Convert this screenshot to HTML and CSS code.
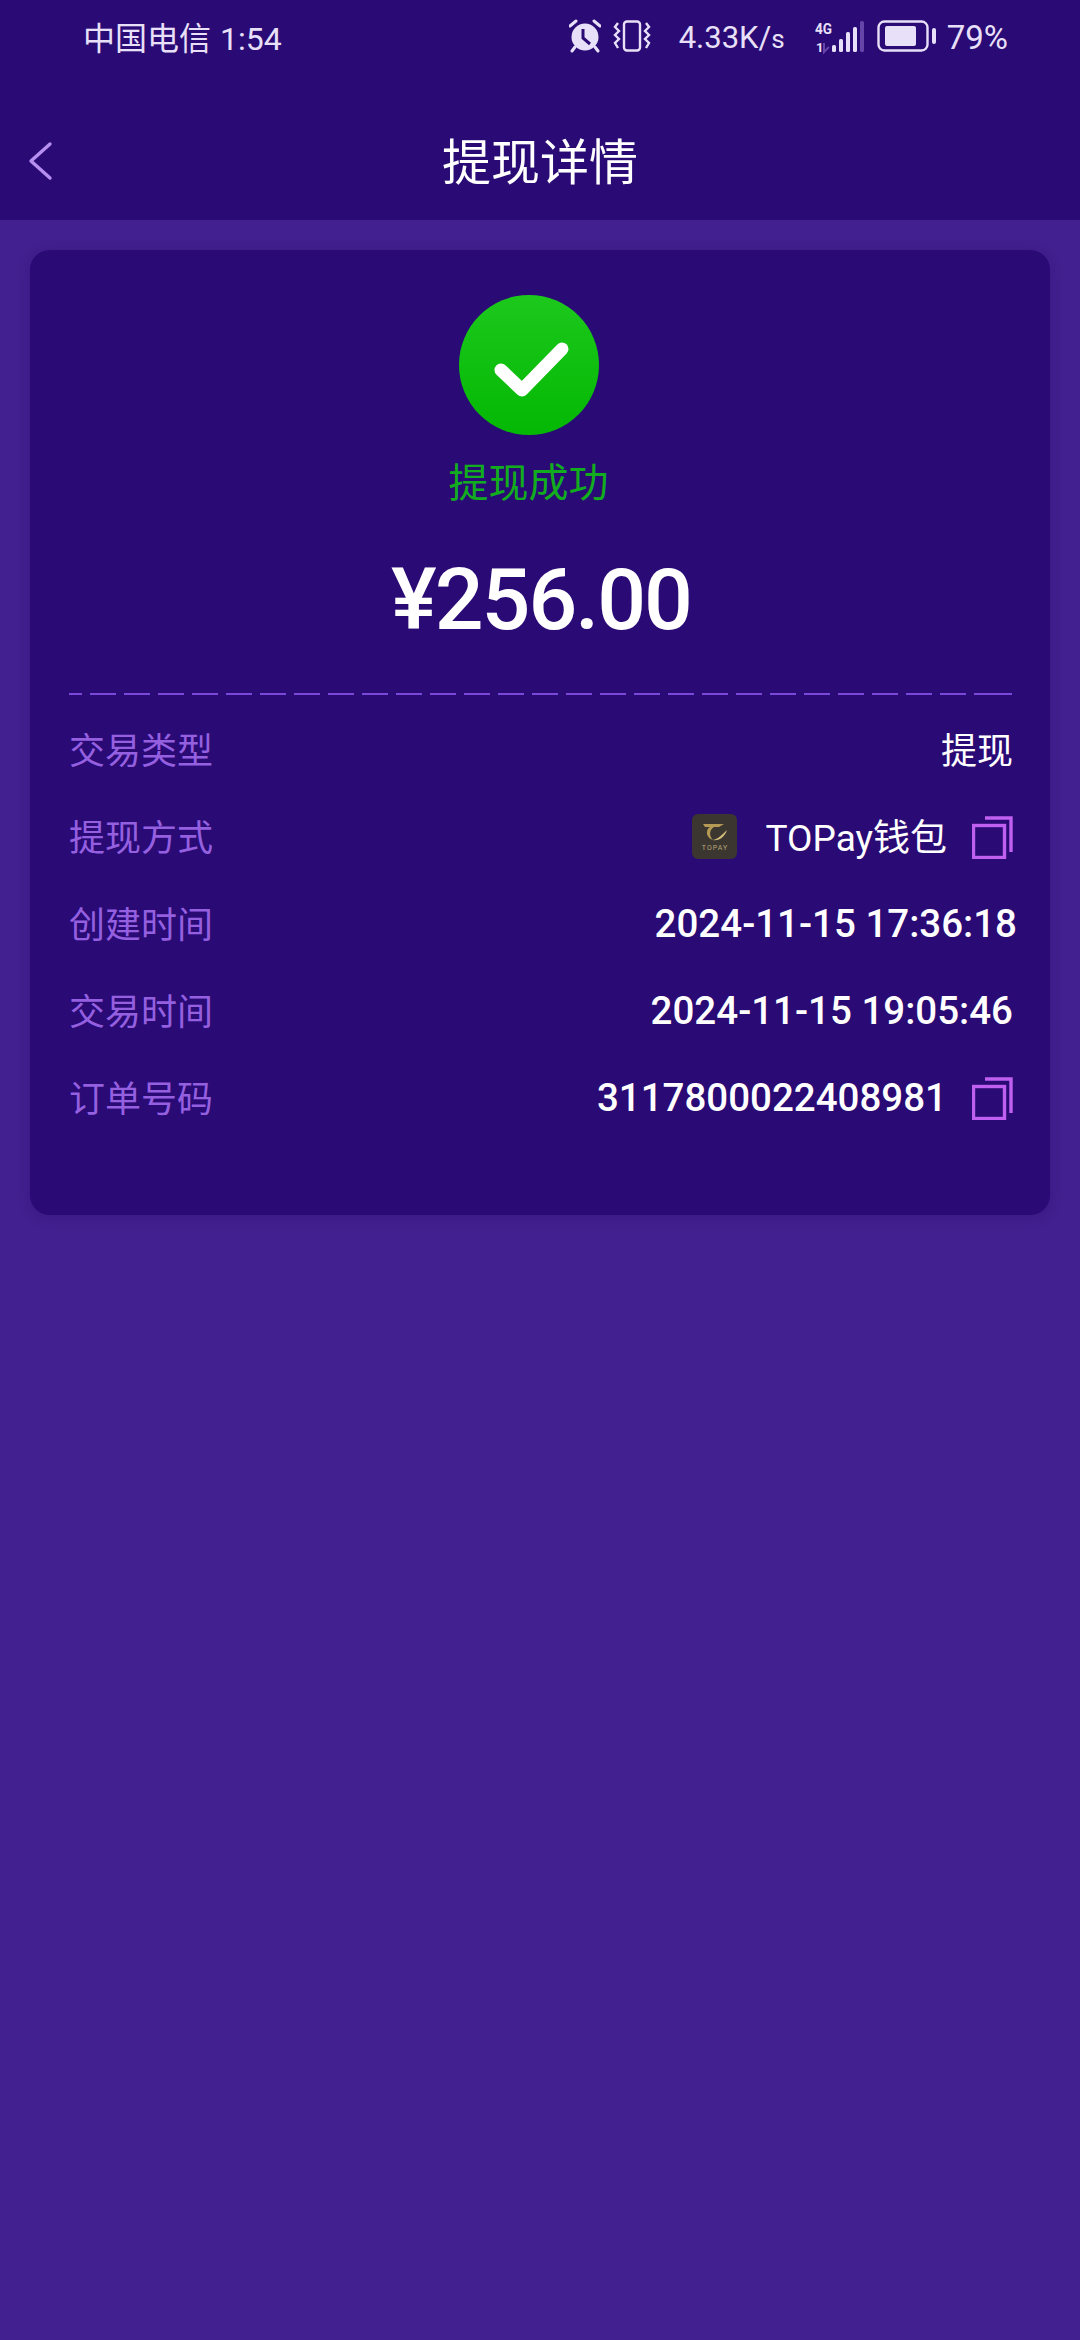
FILE: index.html
```html
<!DOCTYPE html>
<html lang="zh-CN">
<head>
  <meta charset="UTF-8">
  <meta name="viewport" content="width=device-width, initial-scale=1.0">
  <title>提现详情</title>
  <link rel="stylesheet" href="styles.css">
</head>
<body>

  <!-- Status bar -->
  <div class="status-bar">
    <div class="carrier">中国电信<span class="clock">1:54</span></div>
    <div class="status-right">
      <svg class="ic-alarm" width="32" height="34" viewBox="0 0 32 34">
        <path d="M1 7 L7 2 M31 7 L25 2" stroke="#e8e0f8" stroke-width="3" stroke-linecap="round"/>
        <circle cx="16" cy="18" r="13.5" fill="#e8e0f8"/>
        <path d="M14 10 V19 L21 25" stroke="#2a0a75" stroke-width="3" fill="none"/>
        <path d="M6 28 L3 32 M26 28 L29 32" stroke="#e8e0f8" stroke-width="3" stroke-linecap="round"/>
      </svg>
      <svg class="ic-vibrate" width="38" height="32" viewBox="0 0 38 32">
        <rect x="11" y="1.5" width="16" height="29" rx="3" fill="none" stroke="#e8e0f8" stroke-width="2.4"/>
        <path d="M5 3 L2 7 L6 11 L2 15 L6 19 L2 23 L5 28 M33 3 L36 7 L32 11 L36 15 L32 19 L36 23 L33 28" fill="none" stroke="#e8e0f8" stroke-width="2.4"/>
      </svg>
      <span class="speed">4.33K/<small>s</small></span>
      <svg class="ic-signal" width="49" height="40" viewBox="0 -4 49 40">
        <text x="0" y="13" font-size="15" font-weight="700" fill="#e8e0f8" textLength="17" lengthAdjust="spacingAndGlyphs">4G</text>
        <text x="1" y="31" font-size="13" font-weight="700" fill="#e8e0f8">1</text>
        <path d="M9 22 V31 L14 26" fill="none" stroke="#6545a8" stroke-width="2"/>
        <rect x="17" y="24" width="4" height="7" rx="1.5" fill="#e8e0f8"/>
        <rect x="24" y="18" width="4" height="13" rx="1.5" fill="#e8e0f8"/>
        <rect x="31" y="11" width="4" height="20" rx="1.5" fill="#e8e0f8"/>
        <rect x="38" y="6" width="4" height="25" rx="1.5" fill="#e8e0f8"/>
        <rect x="45" y="0" width="4" height="31" rx="1.5" fill="#6545a8"/>
      </svg>
      <svg class="ic-battery" width="59" height="32" viewBox="0 0 59 32">
        <rect x="1.5" y="1.5" width="49" height="29" rx="6" fill="none" stroke="#e8e0f8" stroke-width="2.4"/>
        <rect x="8" y="6" width="31" height="20" rx="2" fill="#e8e0f8"/>
        <rect x="55" y="8" width="4" height="16" rx="2" fill="#e8e0f8"/>
      </svg>
      <span class="pct">79%</span>
    </div>
  </div>

  <!-- Header -->
  <div class="nav-bar">
    <svg class="back" width="26" height="40" viewBox="0 0 26 40">
      <path d="M23 3 L4 20 L23 37" fill="none" stroke="#b68ff0" stroke-width="3.4" stroke-linecap="round" stroke-linejoin="round"/>
    </svg>
    <h1 class="nav-title">提现详情</h1>
  </div>

  <!-- Main card -->
  <div class="page">
    <div class="card">
      <div class="ok-block">
        <div class="ok-circle">
          <svg width="140" height="140" viewBox="-70 -70 140 140">
            <path d="M-28 5 L-7 25 L33 -16" fill="none" stroke="#fff" stroke-width="13" stroke-linecap="round" stroke-linejoin="round"/>
          </svg>
        </div>
        <div class="ok-text">提现成功</div>
      </div>
      <div class="amount">¥256.00</div>
      <div class="dash"></div>

      <div class="row">
        <span class="label">交易类型</span>
        <span class="value text-val">提现</span>
      </div>
      <div class="row">
        <span class="label">提现方式</span>
        <span class="value">
          <span class="wallet-logo">
            <svg width="30" height="22" viewBox="0 0 30 22">
              <path d="M3 2 H24 L19 5 H14 C9 8 9 14 13 18 C6 16 5 8 10 5 H5 Z" fill="#b59a55"/>
              <path d="M27 8 C24 17 17 19 13 18 C18 17 22 13 27 8 Z" fill="#d6bf7d"/>
            </svg>
            <span class="wallet-name">TOPAY</span>
          </span>
          <span class="wallet-text text-val">TOPay钱包</span>
          <svg class="copy" width="41" height="44" viewBox="0 0 41 44">
            <rect x="1.5" y="10.5" width="31" height="32" fill="none" stroke="#c060f0" stroke-width="3.4"/>
            <path d="M13 3 H39 V37" fill="none" stroke="#c060f0" stroke-width="3.4"/>
          </svg>
        </span>
      </div>
      <div class="row row-created">
        <span class="label">创建时间</span>
        <span class="value num">2024-11-15 17:36:18</span>
      </div>
      <div class="row">
        <span class="label">交易时间</span>
        <span class="value num">2024-11-15 19:05:46</span>
      </div>
      <div class="row">
        <span class="label">订单号码</span>
        <span class="value num">3117800022408981<svg class="copy" width="41" height="44" viewBox="0 0 41 44">
            <rect x="1.5" y="10.5" width="31" height="32" fill="none" stroke="#c060f0" stroke-width="3.4"/>
            <path d="M13 3 H39 V37" fill="none" stroke="#c060f0" stroke-width="3.4"/>
          </svg></span>
      </div>
    </div>
  </div>

</body>
</html>
```

FILE: styles.css
```css
body {
  font-family: Roboto, "Noto Sans CJK SC", sans-serif;
  margin: 0;
  padding: 0;
  width: 1080px;
  height: 2340px;
  background: #42208f;
  color: #fff;
  overflow: hidden;
}

.status-bar {
  height: 76px;
  box-sizing: border-box;
  padding: 0 72px 4px 83px;
  background: #2a0a75;
  display: flex;
  justify-content: space-between;
  align-items: center;
  color: #e8e0f8;
}

.carrier {
  font-size: 32px;
  font-family: "Noto Sans CJK SC", sans-serif;
  white-space: nowrap;
}

.clock {
  margin-left: 9px;
  font-family: Roboto, sans-serif;
}

.status-right {
  display: flex;
  align-items: center;
}

.ic-vibrate {
  margin-left: 12px;
}

.speed {
  margin-left: 28px;
  margin-top: 3px;
  font-size: 31px;
  white-space: nowrap;
}

.speed small {
  font-size: 26px;
}

.ic-signal {
  margin-left: 30px;
  margin-top: 2px;
}

.ic-battery {
  margin-left: 13px;
}

.pct {
  margin-left: 11px;
  margin-top: 3px;
  font-size: 33px;
}

.nav-bar {
  height: 144px;
  box-sizing: border-box;
  padding-top: 32px;
  background: #2a0a75;
  display: flex;
  justify-content: center;
  align-items: center;
  position: relative;
}

.back {
  position: absolute;
  left: 27px;
  top: 65px;
}

.nav-title {
  margin: 0;
  font-size: 49px;
  font-weight: 400;
  line-height: 64px;
}

.page {
  padding: 30px 30px 0;
}

.card {
  height: 965px;
  box-sizing: border-box;
  padding: 45px 37px 0 39px;
  background: #2a0a75;
  border-radius: 20px;
  box-shadow: 0 2px 12px rgba(30, 5, 90, 0.25);
  display: flex;
  flex-direction: column;
}

.ok-block {
  padding-right: 25px;
}

.ok-circle {
  width: 140px;
  height: 140px;
  margin: 0 auto;
  border-radius: 50%;
  background: linear-gradient(#1cc81c, #04b804);
}

.ok-circle svg {
  display: block;
}

.ok-text {
  margin-top: 21px;
  text-align: center;
  font-size: 40px;
  line-height: 56px;
  color: #12ad1e;
}

.amount {
  margin-top: 38px;
  text-align: center;
  font-size: 86px;
  line-height: 100px;
  font-weight: 500;
  letter-spacing: -2px;
}

.dash {
  height: 2px;
  margin-top: 43px;
  margin-right: 1px;
  background: repeating-linear-gradient(90deg, #7a48d8 0, #7a48d8 26px, transparent 26px, transparent 34px);
  background-position: -13px 0;
}

.row {
  height: 87px;
  display: flex;
  justify-content: space-between;
  align-items: center;
}

.label {
  font-size: 36px;
  color: #9460e0;
  margin-bottom: 4px;
}

.dash + .row {
  margin-top: 11px;
}

.value {
  display: flex;
  align-items: center;
  font-size: 36px;
  white-space: nowrap;
}

.text-val {
  margin-bottom: 4px;
}

.num {
  font-size: 38.5px;
  font-weight: 500;
}

.row-created .value {
  margin-right: -4px;
}

.wallet-logo {
  width: 45px;
  height: 45px;
  border-radius: 6px;
  background: #3b3630;
  display: flex;
  flex-direction: column;
  align-items: center;
  justify-content: center;
  margin-right: 28px;
}

.wallet-name {
  font-size: 7px;
  line-height: 8px;
  color: #b9a878;
  letter-spacing: 1px;
}

.wallet-text {
  font-size: 37px;
  margin-right: 25px;
}

.copy {
  flex: none;
}

.num .copy {
  margin-left: 25px;
}
```
